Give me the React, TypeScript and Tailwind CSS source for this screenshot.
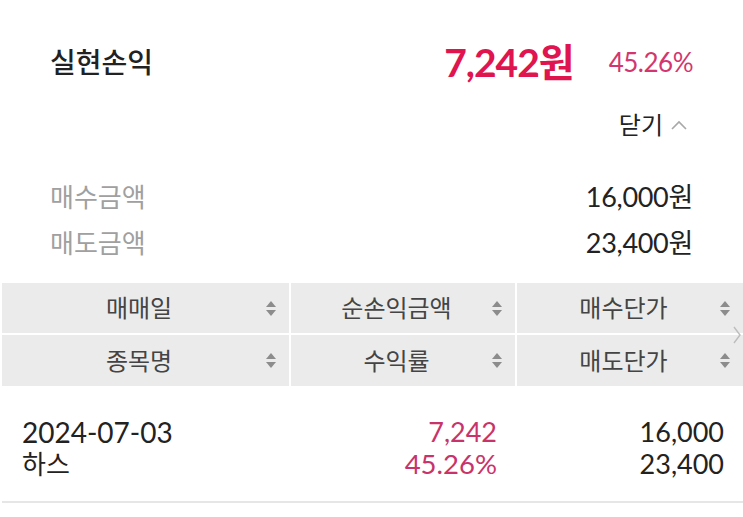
import type { ReactNode } from "react"

const font = { fontFamily: 'Lato, "Noto Sans CJK KR", sans-serif' }

function SortIcon() {
  return (
    <svg width="10" height="17" viewBox="0 0 10 17" className="shrink-0">
      <path d="M0 7 L5 1 L10 7 Z" fill="#8c8c8c" />
      <path d="M0 10 L5 16 L10 10 Z" fill="#8c8c8c" />
    </svg>
  )
}

function HeaderCell({ children }: { children: ReactNode }) {
  return (
    <div className="flex items-center bg-[#ebebeb] pl-[10px] pr-[13px]">
      <span className="flex-1 text-center text-[24px] text-[#444]">{children}</span>
      <SortIcon />
    </div>
  )
}

const headers = ["매매일", "순손익금액", "매수단가", "종목명", "수익률", "매도단가"]

export default function App() {
  return (
    <div className="min-h-[517px] w-[743px] bg-white" style={font}>
      <div className="px-[50px] pt-[34px]">
        <div className="flex h-[56px] items-center justify-between">
          <span className="text-[28px] font-medium text-[#222]">실현손익</span>
          <div className="flex items-center gap-[35px]">
            <span className="text-[39px] font-bold tracking-[-1px] text-[#e0144f]">7,242원</span>
            <span className="text-[26px] tracking-[-0.5px] text-[#d3366f]">45.26%</span>
          </div>
        </div>
        <div className="mt-[17px] flex h-[36px] items-center justify-end pr-[5px]">
          <span className="text-[24px] text-[#222]">닫기</span>
          <svg width="18" height="12" viewBox="0 0 18 12" className="ml-[7px]">
            <path d="M2 10 L9 3 L16 10" fill="none" stroke="#a8a8a8" strokeWidth="1.6" />
          </svg>
        </div>
        <div className="mt-[31px]">
          <div className="flex h-[46px] items-center justify-between">
            <span className="text-[26px] text-[#a0a0a0]">매수금액</span>
            <span className="text-[27px] tracking-[-0.3px] text-[#222]">16,000원</span>
          </div>
          <div className="flex h-[46px] items-center justify-between">
            <span className="text-[26px] text-[#a0a0a0]">매도금액</span>
            <span className="text-[27px] tracking-[-0.3px] text-[#222]">23,400원</span>
          </div>
        </div>
      </div>

      <div className="relative mt-[17px] pl-[2px]">
        <div className="grid grid-cols-[287px_224px_226px] grid-rows-[50px_51px] gap-[2px]">
          {headers.map((h) => (
            <HeaderCell key={h}>{h}</HeaderCell>
          ))}
        </div>
        <svg
          width="10"
          height="18"
          viewBox="0 0 10 18"
          className="absolute right-[1px] top-[43px]"
        >
          <path d="M2 1 L8 9 L2 17" fill="none" stroke="#bdbdbd" strokeWidth="1.4" />
        </svg>
      </div>

      <div className="mt-[30px] grid grid-cols-[289px_208px_227px] leading-[32px]">
        <div className="pl-[22px] text-[#222]">
          <div className="text-[28px]">2024-07-03</div>
          <div className="text-[26px]">하스</div>
        </div>
        <div className="text-right text-[27px] text-[#c8346a]">
          <div>7,242</div>
          <div className="text-[27.5px]">45.26%</div>
        </div>
        <div className="text-right text-[27px] text-[#222]">
          <div>16,000</div>
          <div>23,400</div>
        </div>
      </div>

      <div className="ml-[2px] mt-[21px] h-[2px] bg-[#e6e6e6]" />
    </div>
  )
}
